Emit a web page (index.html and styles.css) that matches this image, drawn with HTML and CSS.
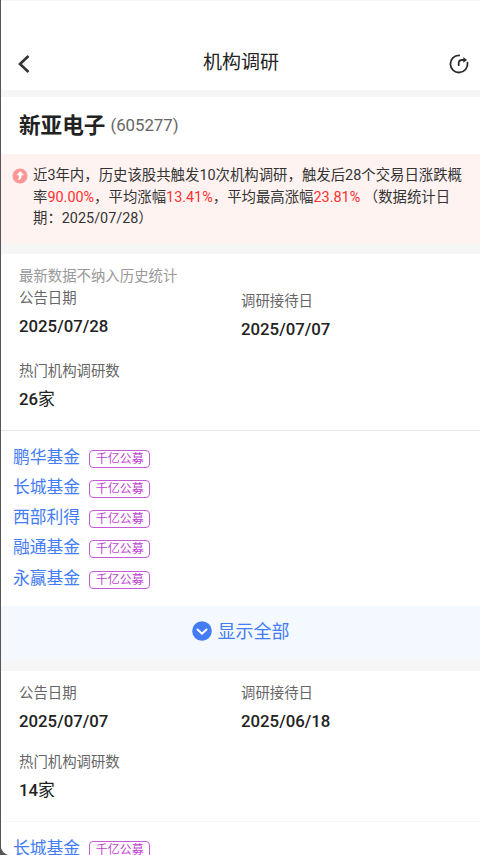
FILE: index.html
```html
<!DOCTYPE html>
<html lang="zh-CN">

<head>
    <meta charset="UTF-8" />
    <meta name="viewport" content="width=device-width, initial-scale=1.0" />
    <title>机构调研</title>
    <link rel="stylesheet" href="styles.css">
</head>

<body>
    <div class="page">
        <div class="header">
            <svg class="icon-back" viewBox="0 0 12 18"><path d="M10.500 1L2 9l8.500 8" /></svg>
            <h1>机构调研</h1>
            <svg class="icon-share" viewBox="0 0 20 20">
                <path d="M10.200 1.300A8.600 8.600 0 1 0 18.500 8.700" />
                <path d="M9.700 11.200V9.500Q9.700 6 13.200 6H15" />
                <path class="arrow" d="M14.300 2.900L18 5.900l-3.700 2.900z" />
            </svg>
        </div>

        <div class="stock">
            <span class="name">新亚电子</span>
            <span class="code">(605277)</span>
        </div>

        <div class="tip">
            <svg class="icon-up" viewBox="0 0 16 16">
                <circle cx="8" cy="8" r="7.500" />
                <path d="M8.300 3L12 7.200H9.700Q9.800 11.800 5.600 12.200 7.300 10.700 7 7.200H4.500z" />
            </svg>
            <p>近3年内，历史该股共触发10次机构调研，触发后28个交易日涨跌概<br>率<em>90.00%</em>，平均涨幅<em>13.41%</em>，平均最高涨幅<em>23.81%</em> （数据统计日<br>期：2025/07/28）</p>
        </div>

        <div class="card">
            <div class="info first">
                <div class="col">
                    <div class="note">最新数据不纳入历史统计</div>
                    <div class="label">公告日期</div>
                    <div class="value">2025/07/28</div>
                </div>
                <div class="col">
                    <div class="label">调研接待日</div>
                    <div class="value">2025/07/07</div>
                </div>
                <div class="col count">
                    <div class="label">热门机构调研数</div>
                    <div class="value">26<span>家</span></div>
                </div>
            </div>
            <div class="funds">
                <div class="fund"><a>鹏华基金</a><span class="tag">千亿公募</span></div>
                <div class="fund"><a>长城基金</a><span class="tag">千亿公募</span></div>
                <div class="fund"><a>西部利得</a><span class="tag">千亿公募</span></div>
                <div class="fund"><a>融通基金</a><span class="tag">千亿公募</span></div>
                <div class="fund"><a>永赢基金</a><span class="tag">千亿公募</span></div>
            </div>
            <div class="more">
                <svg class="icon-down" viewBox="0 0 20 20">
                    <circle cx="10" cy="10" r="9.800" />
                    <path d="M5.500 8.500l4.500 4.200 4.500-4.200" />
                </svg>
                <span>显示全部</span>
            </div>
        </div>

        <div class="card">
            <div class="info">
                <div class="col">
                    <div class="label">公告日期</div>
                    <div class="value">2025/07/07</div>
                </div>
                <div class="col">
                    <div class="label">调研接待日</div>
                    <div class="value">2025/06/18</div>
                </div>
                <div class="col count">
                    <div class="label">热门机构调研数</div>
                    <div class="value">14<span>家</span></div>
                </div>
            </div>
            <div class="funds">
                <div class="fund"><a>长城基金</a><span class="tag">千亿公募</span></div>
            </div>
        </div>
    </div>
</body>

</html>
```

FILE: styles.css
```css
* {
    margin: 0;
    padding: 0;
    box-sizing: border-box;
}

body {
    font-family: Roboto, "Noto Sans CJK SC", sans-serif;
    background: #57575b;
    color: #222;
    height: 100vh;
    overflow: hidden;
}

.page {
    height: 855px;
    margin-left: 1px;
    padding-top: 1px;
    overflow: hidden;
    background: #f6f6f6;
    border-bottom-left-radius: 9px;
}

/* 顶部导航 */
.header {
    display: flex;
    align-items: center;
    justify-content: space-between;
    height: 89px;
    padding: 36px 11px 0 17px;
    background: #fff;
}

.header h1 {
    font-size: 19px;
    font-weight: 400;
    line-height: 28px;
    margin: 0 0 2px 3px;
}

.icon-back {
    width: 12px;
    height: 18px;
    fill: none;
    stroke: #333;
    stroke-width: 2.6;
}

.icon-share {
    width: 20px;
    height: 20px;
    fill: none;
    stroke: #2b2b2b;
    stroke-width: 1.8;
    stroke-linecap: round;
}

.icon-share .arrow {
    fill: #2b2b2b;
    stroke: none;
}

/* 股票名称 */
.stock {
    display: flex;
    align-items: center;
    gap: 5px;
    height: 57px;
    margin-top: 7px;
    padding: 0 0 5px 18px;
    background: #fff;
}

.stock .name {
    font-size: 21.6px;
    font-weight: 700;
}

.stock .code {
    font-size: 16.8px;
    color: #666;
    padding-top: 4px;
}

/* 统计提示 */
.tip {
    display: flex;
    height: 90px;
    padding: 11px 0 0 11px;
    background: #fff3f2;
}

.tip p {
    font-size: 14.4px;
    line-height: 21.5px;
    margin-left: 5px;
    white-space: nowrap;
    color: #333;
}

.tip em {
    font-style: normal;
    color: #ff3030;
}

.icon-up {
    width: 16px;
    height: 16px;
    margin-top: 3px;
    fill: #ff9696;
}

.icon-up path {
    fill: #fff;
}

/* 调研卡片 */
.card {
    margin-top: 10px;
    background: #fff;
}

.card + .card {
    margin-top: 12px;
}

.info {
    display: grid;
    grid-template-columns: 222px 1fr;
    height: 151px;
    padding: 12px 0 0 18px;
    align-content: start;
    border-bottom: 1px solid #f6f6f6;
}

.info.first {
    height: 177px;
    border-bottom-color: #e8e8e8;
}

.first .col:nth-child(2) {
    padding-top: 25px;
}

.note,
.label {
    font-size: 14.4px;
    line-height: 22px;
    color: #666;
}

.note {
    color: #999;
}

.value {
    font-size: 16.8px;
    font-weight: 500;
    line-height: 26px;
    margin-top: 3px;
}

.value span {
    font-weight: 400;
}

.count {
    padding-top: 18px;
}

.first .count {
    padding-top: 19px;
}

/* 基金列表 */
.funds {
    height: 175px;
    padding: 10px 0 0 12px;
}

.fund {
    display: flex;
    align-items: center;
    height: 30.25px;
}

.fund a {
    font-size: 16.8px;
    line-height: 26px;
    padding-top: 1px;
    color: #437cf5;
}

.tag {
    width: 61px;
    height: 18px;
    margin: 5px 0 0 9px;
    border: 1px solid #c65bd8;
    border-radius: 4px;
    font-size: 12px;
    line-height: 16px;
    text-align: center;
    color: #bf45d2;
}

.more {
    display: flex;
    align-items: center;
    justify-content: center;
    gap: 6px;
    height: 53px;
    padding-bottom: 4px;
    background: #f4f9ff;
    font-size: 18px;
    color: #437cf5;
}

.more span {
    margin-top: -1px;
}

.icon-down {
    width: 20px;
    height: 20px;
    fill: #437cf5;
}

.icon-down path {
    fill: none;
    stroke: #fff;
    stroke-width: 2;
    stroke-linecap: round;
    stroke-linejoin: round;
}
```
